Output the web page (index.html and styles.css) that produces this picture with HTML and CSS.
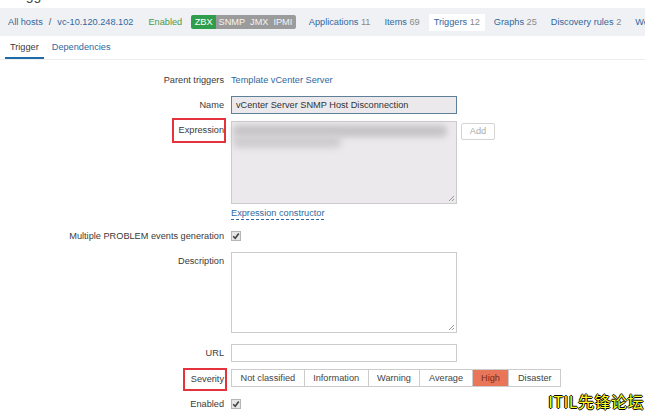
FILE: index.html
```html
<!DOCTYPE html>
<html>
<head>
<meta charset="utf-8">
<link rel="stylesheet" href="styles.css">
</head>
<body>
<div class="title"><h1>Triggers</h1></div>
<div class="hostbar">
  <span class="crumb">All hosts</span><span class="sep">/</span><span class="crumb">vc-10.120.248.102</span>
  <span class="status">Enabled</span>
  <span class="tags"><span class="tag on">ZBX</span><span class="tag">SNMP</span><span class="tag">JMX</span><span class="tag">IPMI</span></span>
  <nav class="hostnav">
    <span class="navitem">Applications <em>11</em></span>
    <span class="navitem">Items <em>69</em></span>
    <span class="navitem sel">Triggers <em>12</em></span>
    <span class="navitem">Graphs <em>25</em></span>
    <span class="navitem">Discovery rules <em>2</em></span>
    <span class="navitem">Web</span>
  </nav>
</div>
<div class="tabs">
  <span class="tab active">Trigger</span>
  <span class="tab">Dependencies</span>
</div>
<div class="form">
  <div class="lbl">Parent triggers</div>
  <div class="val"><span class="link">Template vCenter Server</span></div>

  <div class="lbl">Name</div>
  <div class="val"><div class="input name">vCenter Server SNMP Host Disconnection</div></div>

  <div class="lbl"><span class="mark mark-exp">Expression</span></div>
  <div class="val exprcell">
    <div class="exprrow">
      <div class="area expr">
        <div class="blob b1"></div>
        <div class="blob b2"></div>
        <svg class="grip" width="7" height="7" viewBox="0 0 7 7"><path d="M6 1L1 6M6 4L4 6" stroke="#999" stroke-width="1" fill="none"/></svg>
      </div>
      <span class="btn">Add</span>
    </div>
    <span class="link dashed">Expression constructor</span>
  </div>

  <div class="lbl">Multiple PROBLEM events generation</div>
  <div class="val"><span class="cb"><svg width="8" height="8" viewBox="0 0 8 8"><path d="M1.2 4.2L3.2 6.2L6.8 1.6" stroke="#444" stroke-width="1.6" fill="none"/></svg></span></div>

  <div class="lbl">Description</div>
  <div class="val"><div class="area desc"><svg class="grip" width="7" height="7" viewBox="0 0 7 7"><path d="M6 1L1 6M6 4L4 6" stroke="#999" stroke-width="1" fill="none"/></svg></div></div>

  <div class="lbl urlrow">URL</div>
  <div class="val urlrow"><div class="input url"></div></div>

  <div class="lbl"><span class="mark mark-sev">Severity</span></div>
  <div class="val">
    <div class="sev">
      <span class="seg">Not classified</span><span class="seg">Information</span><span class="seg">Warning</span><span class="seg">Average</span><span class="seg high">High</span><span class="seg">Disaster</span>
    </div>
  </div>

  <div class="lbl">Enabled</div>
  <div class="val"><span class="cb"><svg width="8" height="8" viewBox="0 0 8 8"><path d="M1.2 4.2L3.2 6.2L6.8 1.6" stroke="#444" stroke-width="1.6" fill="none"/></svg></span></div>
</div>
<div class="watermark">ITIL先锋论坛</div>
</body>
</html>
```
FILE: styles.css
```css
html, body {
  margin: 0;
  padding: 0;
  overflow: hidden;
  background: #fff;
}
body {
  font-family: "Liberation Sans", Arial, sans-serif;
  font-size: 9.2px;
  color: #3a3a3a;
  position: relative;
  height: 412px;
}
.title {
  height: 8px;
  overflow: hidden;
}
.title h1 {
  margin: -12px 0 0 10px;
  font-size: 14px;
  line-height: 14px;
  font-weight: normal;
  color: #444;
}
.hostbar {
  height: 28px;
  background: #f0f1f4;
  display: flex;
  align-items: center;
  padding-left: 8px;
  white-space: nowrap;
  overflow: hidden;
}
.crumb { color: #2f68a0; }
.sep { color: #555; margin: 0 6px; }
.status { color: #4a9a48; margin-left: 15px; }
.tags {
  display: flex;
  margin-left: 9px;
  height: 14px;
  line-height: 14px;
}
.tag {
  background: #9b9b9b;
  color: #f4f4f4;
  padding: 0 2.5px;
}
.tag.on {
  background: #2e9e4d;
  color: #fff;
  padding: 0 3.5px;
  border-radius: 2px 0 0 2px;
}
.tag:last-child { border-radius: 0 2px 2px 0; padding-right: 3.5px; }
.hostnav {
  display: flex;
  gap: 4px;
  margin-left: 8px;
}
.navitem {
  color: #2f68a0;
  padding: 0 5px;
  line-height: 17px;
}
.navitem em {
  font-style: normal;
  color: #8a8a8a;
}
.navitem.sel { background: #fff; }
.tabs {
  display: flex;
  gap: 3px;
  padding-left: 5px;
  height: 24px;
  border-bottom: 1px solid #eceef0;
  box-sizing: border-box;
}
.tab {
  padding: 0 5px;
  line-height: 22px;
  color: #2f68a0;
}
.tab.active {
  color: #3a3a3a;
  border-bottom: 2px solid #1f6aa8;
}
.form {
  display: grid;
  grid-template-columns: 224px 226px;
  column-gap: 7px;
  row-gap: 7px;
  padding-top: 11px;
}
.lbl {
  text-align: right;
  line-height: 18px;
  color: #3a3a3a;
  white-space: nowrap;
}
.val {
  line-height: 18px;
  white-space: nowrap;
}
.exprcell { margin-bottom: -2px; }
.link { color: #2f68a0; }
.dashed {
  display: inline-block;
  line-height: 12px;
  margin-top: 2px;
  border-bottom: 1px dashed #2f68a0;
}
.input {
  box-sizing: border-box;
  width: 226px;
  height: 18px;
  border: 1px solid #ccc;
  padding: 0 4px;
  line-height: 16px;
}
.input.name {
  background: #ebe9eb;
  border-color: #5e8098;
  color: #333;
}
.exprrow {
  display: flex;
  align-items: flex-start;
  gap: 4px;
}
.area {
  box-sizing: border-box;
  width: 226px;
  border: 1px solid #ccc;
  position: relative;
  flex: none;
}
.area.expr {
  height: 83px;
  background: #ece9ec;
  padding-top: 3px;
}
.area.desc {
  height: 81px;
  background: #fff;
}
.blob {
  background: #c6c4c6;
  filter: blur(3px);
  border-radius: 5px;
}
.b1 { height: 12px; width: 214px; margin-left: 1px; }
.b2 { height: 13px; width: 108px; margin-left: 1px; margin-top: -2px; background: #cfcdcf; }
.grip {
  position: absolute;
  right: 1px;
  bottom: 1px;
}
.btn {
  flex: none;
  box-sizing: border-box;
  width: 34px;
  height: 17px;
  margin-top: 2px;
  border: 1px solid #d4d4d4;
  border-radius: 2px;
  background: #fff;
  color: #aaa;
  text-align: center;
  line-height: 15px;
}
.cb {
  display: inline-block;
  box-sizing: border-box;
  width: 10px;
  height: 10px;
  border: 1px solid #b5b5b5;
  background: #e6e6e6;
  vertical-align: middle;
  line-height: 0;
  margin-top: -2px;
}
.urlrow { margin-top: 4px; }
.input.url { background: #fff; }
.sev {
  display: flex;
  height: 18px;
  border: 1px solid #ccc;
  box-sizing: border-box;
  width: max-content;
}
.seg {
  padding: 0 8.5px;
  line-height: 16px;
  color: #444;
  border-left: 1px solid #ccc;
  background: #fff;
}
.seg:first-child { border-left: none; }
.seg.high {
  background: #e97659;
  color: #7a2a1a;
}
.mark {
  display: inline-block;
  vertical-align: top;
  border: 2px solid #e5333d;
}
.mark-exp {
  padding: 1px 0 2px 5px;
  margin: -3px -2px -4px -7px;
}
.mark-sev {
  padding: 0 1px 1px 6px;
  margin: -1px -3px -3px -8px;
}
.watermark {
  position: absolute;
  right: 1px;
  bottom: 1px;
  font-family: "Noto Sans CJK SC", "Liberation Sans", sans-serif;
  font-size: 16px;
  line-height: 20px;
  color: #ffff22;
  letter-spacing: 0.5px;
  text-shadow: 1px 0 0 #000, -1px 0 0 #000, 0 1px 0 #000, 0 -1px 0 #000;
}
```
